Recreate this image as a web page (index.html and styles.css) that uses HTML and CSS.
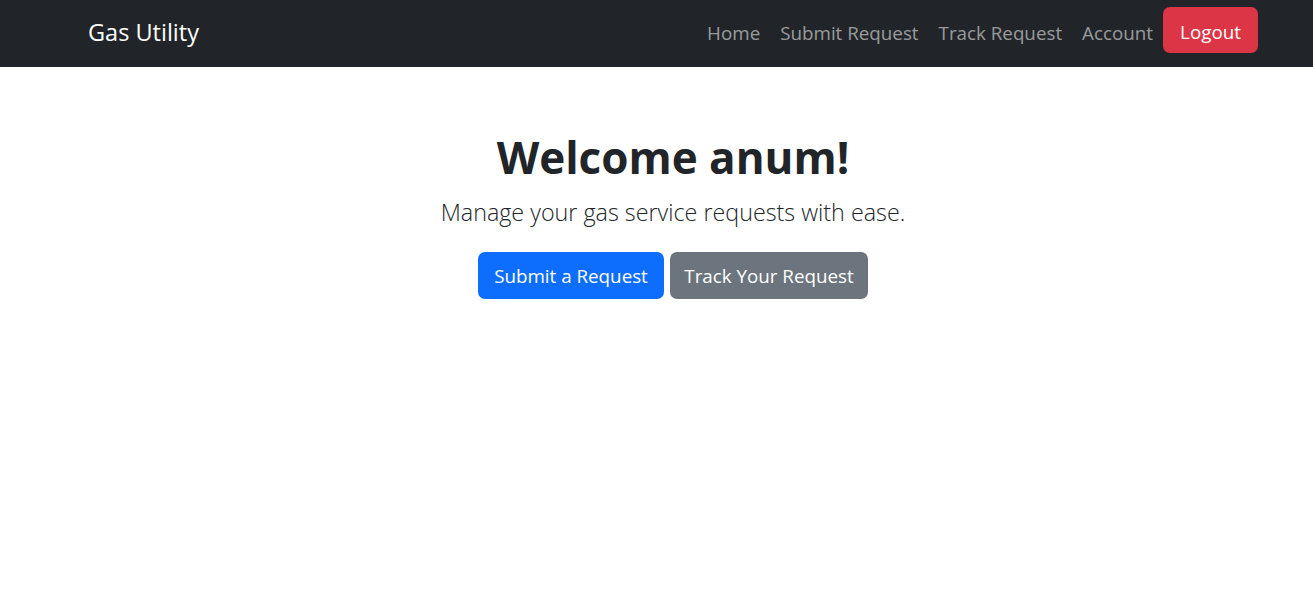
FILE: index.html
```html
<!DOCTYPE html>
<html lang="en">
<head>
<meta charset="utf-8">
<title>Gas Utility</title>
<link rel="stylesheet" href="styles.css">
</head>
<body>
<nav class="navbar">
  <a class="brand" href="#">Gas Utility</a>
  <ul class="nav">
    <li><a class="nav-link" href="#">Home</a></li>
    <li><a class="nav-link" href="#">Submit Request</a></li>
    <li><a class="nav-link" href="#">Track Request</a></li>
    <li><a class="nav-link" href="#">Account</a></li>
    <li><a class="btn btn-danger" href="#">Logout</a></li>
  </ul>
</nav>
<main class="hero">
  <h1 class="title">Welcome anum!</h1>
  <p class="lead">Manage your gas service requests with ease.</p>
  <div class="actions">
    <a class="btn btn-primary" href="#">Submit a Request</a>
    <a class="btn btn-secondary" href="#">Track Your Request</a>
  </div>
</main>
</body>
</html>
```
FILE: styles.css
```css
* { box-sizing: border-box; }
html, body { margin: 0; padding: 0; }
body {
  font-family: "Open Sans", "Noto Sans", sans-serif;
  color: #212529;
  background: #fff;
}
a { text-decoration: none; }
.navbar {
  height: 67px;
  background: #212529;
  display: flex;
  align-items: center;
  justify-content: space-between;
  padding: 0 55px 0 88px;
}
.brand {
  color: #fff;
  font-size: 23.5px;
  line-height: 1;
  margin-top: -1px;
}
.nav {
  list-style: none;
  margin: 0;
  padding: 0;
  display: flex;
  align-items: center;
}
.nav-link {
  display: block;
  color: rgba(255, 255, 255, 0.55);
  font-size: 18.8px;
  padding: 8px 10px;
  margin-top: -1px;
  white-space: nowrap;
}
.btn {
  display: inline-flex;
  align-items: center;
  justify-content: center;
  color: #fff;
  font-size: 18.8px;
  height: 47px;
  padding: 0 16px;
  border-radius: 7px;
  white-space: nowrap;
}
.btn-danger { background: #dc3545; height: 46px; width: 95px; padding: 3px 0 0; margin-top: -7px; }
.btn-primary { background: #0d6efd; width: 186px; }
.btn-secondary { background: #6c757d; width: 198px; }
.hero {
  display: flex;
  flex-direction: column;
  align-items: center;
  padding-left: 33px;
  padding-top: 58px;
}
.title {
  margin: 0;
  font-size: 44px;
  font-weight: 700;
  line-height: 64px;
}
.lead {
  margin: 7px 0 0;
  font-size: 23.3px;
  font-weight: 300;
  line-height: 32px;
  color: #212529;
}
.actions {
  display: flex;
  gap: 6px;
  margin-top: 24px;
}
```
